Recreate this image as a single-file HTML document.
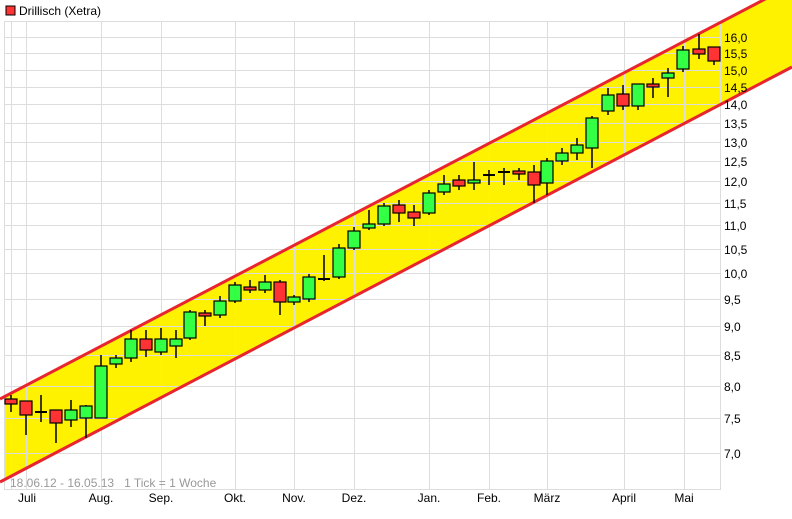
<!DOCTYPE html>
<html><head><meta charset="utf-8"><style>
body{margin:0;background:#fff;width:792px;height:519px;overflow:hidden}
svg{display:block}
text{font-family:"Liberation Sans",sans-serif;font-size:12px}
</style></head><body>
<svg width="792" height="519" viewBox="0 0 792 519">
<rect x="6" y="6" width="9" height="9" fill="#f33" stroke="#000" stroke-width="1"/>
<text x="19" y="15" fill="#000">Drillisch (Xetra)</text>
<polygon points="4,397 792,-15 792,67 4,480" fill="#fff200"/>
<g stroke="#ddd" stroke-width="1" fill="none">
<rect x="4.5" y="21.5" width="716" height="468"/>
<path d="M11.5 21V489M26.5 21V489M101.5 21V489M161.5 21V489M235.5 21V489M294.5 21V489M354.5 21V489M429.5 21V489M489.5 21V489M547.5 21V489M624.5 21V489M684.5 21V489"/>
<path d="M4 37.5H720M4 53.5H720M4 70.5H720M4 87.5H720M4 104.5H720M4 123.5H720M4 142.5H720M4 161.5H720M4 181.5H720M4 203.5H720M4 225.5H720M4 249.5H720M4 273.5H720M4 299.5H720M4 326.5H720M4 355.5H720M4 386.5H720M4 418.5H720M4 453.5H720"/>
</g>
<g stroke="#e8252f" stroke-width="3">
<line x1="0" y1="399" x2="792" y2="-15"/>
<line x1="0" y1="482" x2="792" y2="67"/>
</g>
<g stroke="#000" stroke-width="1.5">
<path d="M11 395V412M26 401V435M41 395V422M56 410V443M71 400V427M86 405V438M101 355V418M116 355V368M131 330V362M146 330V357M161 328V355M176 330V358M190 310V340M205 310V326M220 296V318M235 282V303M250 280V293M265 275V293M280 280V315M294 295V305M309 274V302M324 255V281M339 244V279M354 227V250M369 210V230M384 203V226M399 200V222M414 205V226M429 190V215M444 175V195M459 175V190M474 162V190M489 170V185M504 168V185M519 168V180M534 165V203M547 158V195M562 148V165M577 138V160M592 116V168M608 88V115M623 85V110M638 84V110M653 78V98M668 68V97M683 46V72M699 34V59M714 47V65"/>
</g>
<g stroke="#000" stroke-width="1.2">
<g fill="#f33">
<rect x="5" y="399" width="12" height="5"/>
<rect x="20" y="401" width="12" height="14"/>
<rect x="50" y="410" width="12" height="13"/>
<rect x="140" y="339" width="12" height="11"/>
<rect x="199" y="313" width="12" height="3"/>
<rect x="244" y="287" width="12" height="3"/>
<rect x="274" y="282" width="12" height="20"/>
<rect x="393" y="205" width="12" height="8"/>
<rect x="408" y="212" width="12" height="6"/>
<rect x="453" y="180" width="12" height="6"/>
<rect x="513" y="171" width="12" height="3"/>
<rect x="528" y="172" width="12" height="13"/>
<rect x="617" y="94" width="12" height="12"/>
<rect x="647" y="84" width="12" height="3"/>
<rect x="693" y="49" width="12" height="5"/>
<rect x="708" y="47" width="12" height="14"/>
</g>
<g fill="#3f4">
<rect x="65" y="410" width="12" height="10"/>
<rect x="80" y="406" width="12" height="12"/>
<rect x="95" y="366" width="12" height="52"/>
<rect x="110" y="358" width="12" height="6"/>
<rect x="125" y="339" width="12" height="19"/>
<rect x="155" y="339" width="12" height="13"/>
<rect x="170" y="339" width="12" height="7"/>
<rect x="184" y="312" width="12" height="26"/>
<rect x="214" y="301" width="12" height="14"/>
<rect x="229" y="285" width="12" height="16"/>
<rect x="259" y="282" width="12" height="8"/>
<rect x="288" y="297" width="12" height="5"/>
<rect x="303" y="277" width="12" height="22"/>
<rect x="333" y="248" width="12" height="29"/>
<rect x="348" y="231" width="12" height="17"/>
<rect x="363" y="224" width="12" height="4"/>
<rect x="378" y="206" width="12" height="18"/>
<rect x="423" y="193" width="12" height="20"/>
<rect x="438" y="184" width="12" height="8"/>
<rect x="468" y="180" width="12" height="3"/>
<rect x="541" y="161" width="12" height="22"/>
<rect x="556" y="153" width="12" height="8"/>
<rect x="571" y="145" width="12" height="8"/>
<rect x="586" y="118" width="12" height="30"/>
<rect x="602" y="95" width="12" height="16"/>
<rect x="632" y="84" width="12" height="22"/>
<rect x="662" y="73" width="12" height="5"/>
<rect x="677" y="50" width="12" height="19"/>
</g>
</g>
<g stroke="#000" stroke-width="2"><path d="M35 412H47M318 279H330M483 175H495M498 172H510"/></g>
<g fill="#000" text-anchor="start">
<text x="724" y="42">16,0</text><text x="724" y="58">15,5</text><text x="724" y="75">15,0</text><text x="724" y="92">14,5</text><text x="724" y="109">14,0</text><text x="724" y="128">13,5</text><text x="724" y="147">13,0</text><text x="724" y="166">12,5</text><text x="724" y="186">12,0</text><text x="724" y="208">11,5</text><text x="724" y="230">11,0</text><text x="724" y="254">10,5</text><text x="724" y="278">10,0</text><text x="724" y="304">9,5</text><text x="724" y="331">9,0</text><text x="724" y="360">8,5</text><text x="724" y="391">8,0</text><text x="724" y="423">7,5</text><text x="724" y="458">7,0</text>
</g>
<text x="10" y="487" fill="#999">18.06.12 - 16.05.13&#160;&#160;&#160;1 Tick = 1 Woche</text>
<g fill="#000" text-anchor="middle">
<text x="27" y="502">Juli</text><text x="101" y="502">Aug.</text><text x="161" y="502">Sep.</text><text x="235" y="502">Okt.</text><text x="294" y="502">Nov.</text><text x="354" y="502">Dez.</text><text x="429" y="502">Jan.</text><text x="489" y="502">Feb.</text><text x="547" y="502">März</text><text x="624" y="502">April</text><text x="684" y="502">Mai</text>
</g>
</svg>
</body></html>
